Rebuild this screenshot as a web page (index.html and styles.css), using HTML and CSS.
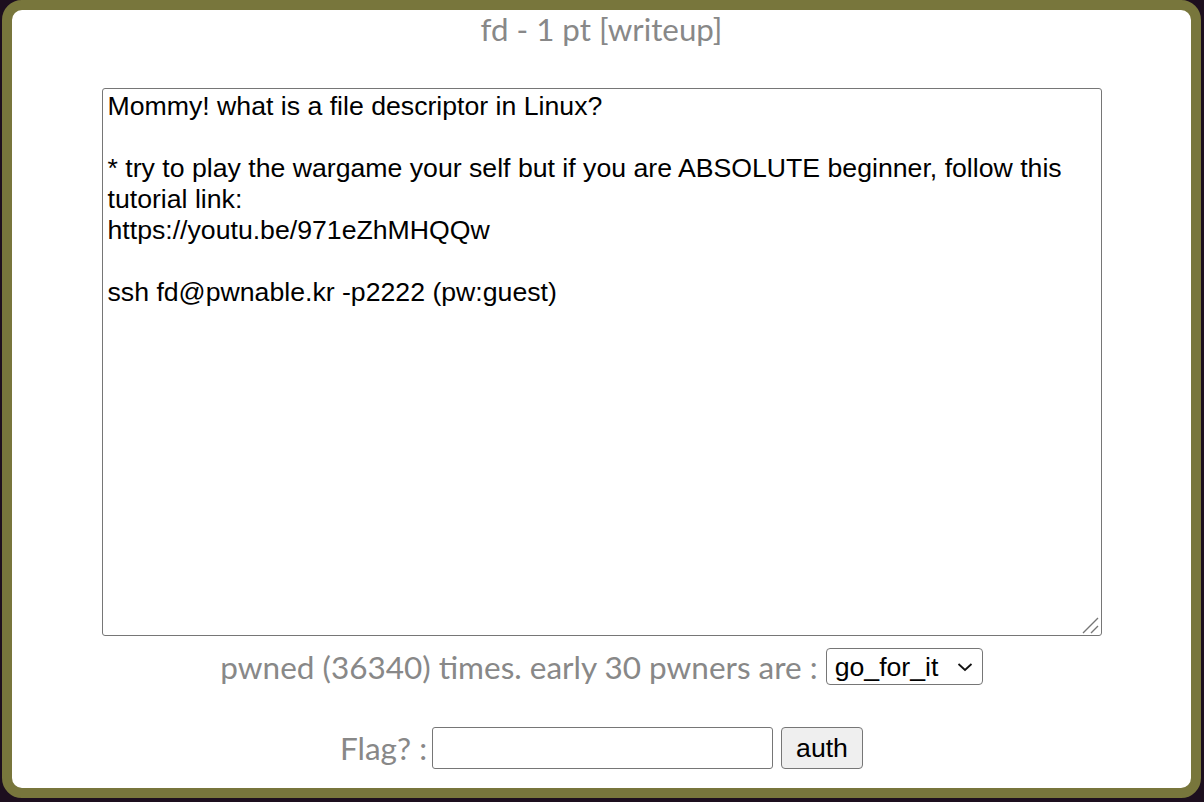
FILE: index.html
```html
<!DOCTYPE html>
<html>
<head>
<meta charset="utf-8">
<link rel="stylesheet" href="styles.css">
</head>
<body>
<div class="frame">
  <div class="title">fd - 1 pt [writeup]</div>
  <div class="desc-wrap">
    <textarea class="desc" readonly>Mommy! what is a file descriptor in Linux?

* try to play the wargame your self but if you are ABSOLUTE beginner, follow this tutorial link:
https://youtu.be/971eZhMHQQw

ssh fd@pwnable.kr -p2222 (pw:guest)
</textarea>
    <svg class="grip" width="18" height="18" viewBox="0 0 18 18"><path d="M2 17 L17 2 M10 17 L17 10" fill="none" stroke="#767676" stroke-width="1.4"/></svg>
  </div>
  <div class="row pwned">
    <span class="label">pwned (36340) times. early 30 pwners are :</span>
    <div class="pick-wrap">
      <select class="pick"><option>go_for_it</option></select>
      <svg class="chev" width="16" height="10" viewBox="0 0 16 10"><path d="M1.5 2 L8 8 L14.5 2" fill="none" stroke="#111" stroke-width="1.8"/></svg>
    </div>
  </div>
  <div class="row flag">
    <span class="label">Flag? :</span>
    <input class="flag-input" type="text">
    <button class="auth">auth</button>
  </div>
</div>
</body>
</html>
```
FILE: styles.css
```css
html, body {
  margin: 0;
  padding: 0;
  height: 100%;
  overflow: hidden;
}
body {
  background: #1d0f1e;
  font-family: Lato, "Liberation Sans", sans-serif;
}
.frame {
  box-sizing: border-box;
  margin: 0 3px 0 2px;
  height: 798px;
  border: 10px solid #78763c;
  border-radius: 20px;
  background: #ffffff;
  display: flex;
  flex-direction: column;
  align-items: center;
}
.title {
  font-size: 31.3px;
  line-height: 34px;
  padding-top: 2px;
  color: #888888;
}
.desc-wrap {
  position: relative;
  display: flex;
  margin-top: 42px;
  flex: none;
}
.desc {
  box-sizing: border-box;
  width: 1000px;
  height: 548px;
  margin: 0;
  border: 1px solid #767676;
  border-radius: 3px;
  padding: 2px 2px 2px 5px;
  font-family: "Liberation Sans", Arial, sans-serif;
  font-size: 26.67px;
  line-height: normal;
  color: #000;
  background: #fff;
  resize: none;
}
.grip {
  position: absolute;
  right: 3px;
  bottom: 2px;
  pointer-events: none;
}
.row {
  display: flex;
  align-items: center;
  font-size: 31.5px;
  color: #888888;
}
.pwned {
  margin-top: 12px;
  height: 37px;
  gap: 8px;
}
.pick-wrap {
  position: relative;
  display: flex;
}
.pick {
  box-sizing: border-box;
  appearance: none;
  -webkit-appearance: none;
  width: 157px;
  height: 37px;
  font-family: "Liberation Sans", Arial, sans-serif;
  font-size: 26.67px;
  color: #000;
  border: 1px solid #767676;
  border-radius: 4px;
  background: #fff;
  padding: 0 30px 0 8px;
}
.chev {
  position: absolute;
  right: 10px;
  top: 14px;
  pointer-events: none;
}
.flag {
  margin-top: 42px;
  height: 42px;
  gap: 5px;
}
.flag-input {
  box-sizing: border-box;
  width: 341px;
  height: 42px;
  border: 1px solid #767676;
  border-radius: 3px;
  font-size: 26.67px;
  padding: 2px;
}
.auth {
  box-sizing: border-box;
  margin-left: 3px;
  width: 82px;
  height: 42px;
  font-family: "Liberation Sans", Arial, sans-serif;
  font-size: 26.67px;
  color: #000;
  background: #efefef;
  border: 1px solid #767676;
  border-radius: 4px;
  padding: 0;
}
```
